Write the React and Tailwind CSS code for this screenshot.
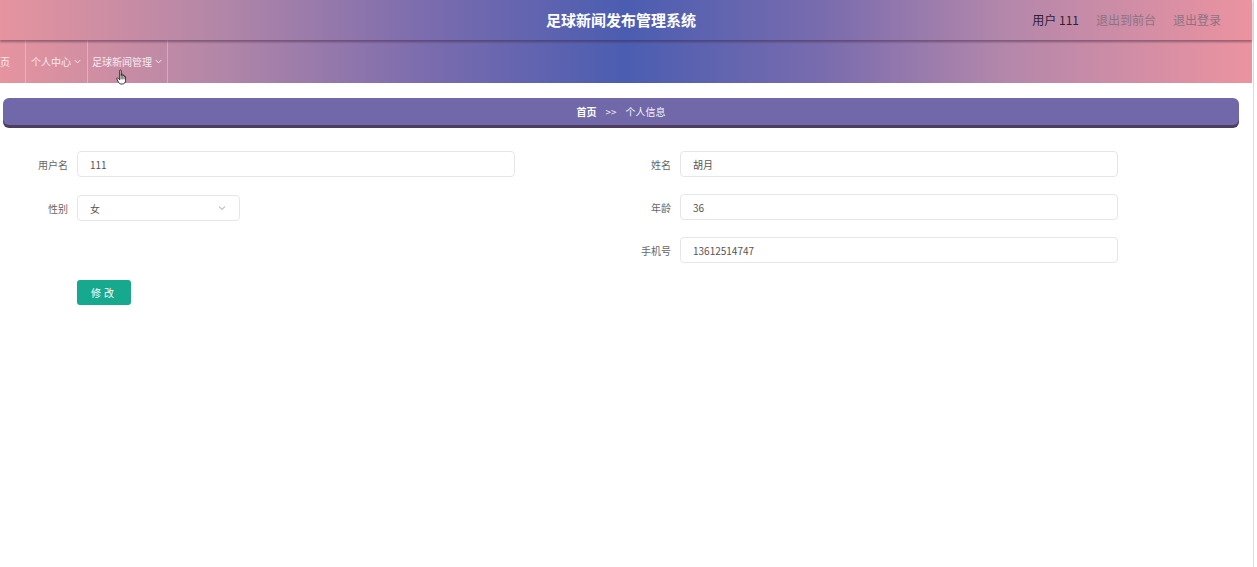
import React from "react";

const Chevron = ({ className = "" }) => (
  <svg viewBox="0 0 10 10" className={className} fill="none" stroke="currentColor" strokeWidth="1.1">
    <path d="M2 3.5 L5 6.5 L8 3.5" />
  </svg>
);

const HandCursor = () => (
  <svg viewBox="0 0 14 18" width="13" height="17" className="absolute left-[116px] top-[69px]">
    <path
      d="M4 1.5 C4 0.7 5.6 0.7 5.6 1.5 L5.6 7 L5.8 5.8 C5.8 5 7.3 5 7.3 5.8 L7.3 7.2 C7.3 6.4 8.8 6.4 8.8 7.2 L8.8 8 C8.8 7.3 10.3 7.3 10.3 8.1 L10.3 12 C10.3 14.5 9 16 7 16 L5.5 16 C4 16 3.2 15 2.5 13.8 L0.9 10.5 C0.5 9.7 1.6 9 2.3 9.8 L4 11.5 Z"
      fill="#ffffff"
      stroke="#111"
      strokeWidth="0.9"
      strokeLinejoin="round"
    />
    <path d="M5.6 7 L5.6 11 M7.3 7.2 L7.3 11 M8.8 8 L8.8 11" stroke="#111" strokeWidth="0.7" />
  </svg>
);

const Field = ({ label, value, width = "w-[438px]", select = false }) => (
  <div className="flex items-center h-[26px]">
    <div className="w-[77px] pr-[9px] text-right text-[10px] text-[#666]">{label}</div>
    <div
      className={`${width} h-[26px] border border-[#e4e6eb] rounded-[4px] bg-white flex items-center px-[12px] text-[10px] text-[#555] justify-between`}
    >
      <span>{value}</span>
      {select && <Chevron className="w-[10px] h-[10px] text-[#c0c4cc]" />}
    </div>
  </div>
);

export default function App() {
  return (
    <div
      className="relative w-[1257px] h-[567px] bg-white overflow-hidden flex"
      style={{ fontFamily: '"Noto Sans CJK SC", "Noto Sans", sans-serif' }}
    >
      <div className="w-[1252px] flex flex-col">
        {/* Header */}
        <div className="bg-[linear-gradient(to_right,#e6949f_0%,#b186a8_18%,#7b6cae_34%,#4b5db1_50%,#7a6cae_66%,#b387ab_80%,#ec93a0_100%)]">
          <div className="h-[40px] grid grid-cols-[1fr_auto_1fr] items-center pr-[10px] shadow-[0_2px_2px_rgba(60,30,60,0.45)] relative">
            <div />
            <div className="text-white font-bold text-[15px] tracking-[0px]">足球新闻发布管理系统</div>
            <div className="flex justify-end items-center gap-[17px] pr-[21px] text-[12px]">
              <span className="text-[#2c2233]">用户 111</span>
              <span className="text-[#8c7384]">退出到前台</span>
              <span className="text-[#8c7384]">退出登录</span>
            </div>
          </div>
          <div className="h-[43px] flex items-center text-[10px] text-[#f7eaf0] -ml-[12px]">
            <div className="h-full flex items-center pl-[2px] pr-[15px] border-r border-white/30">首页</div>
            <div className="h-full flex items-center gap-[2px] px-[5px] border-r border-white/30">
              个人中心
              <Chevron className="w-[9px] h-[9px]" />
            </div>
            <div className="h-full flex items-center gap-[2px] px-[4px] border-r border-white/30">
              足球新闻管理
              <Chevron className="w-[9px] h-[9px]" />
            </div>
          </div>
        </div>

        {/* Breadcrumb */}
        <div className="mt-[15px] ml-[3px] w-[1236px] h-[27px] rounded-[6px] bg-[#7068a8] shadow-[0_3px_0_#4d3d5e] flex items-center justify-center text-[10px] text-white">
          <span className="font-bold">首页</span>
          <span className="mx-[9px] opacity-90">&gt;&gt;</span>
          <span className="opacity-95">个人信息</span>
        </div>

        {/* Form */}
        <div className="mt-[26px] flex">
          <div className="w-[603px] flex flex-col gap-[18px]">
            <Field label="用户名" value="111" />
            <Field label="性别" value="女" width="w-[163px]" select />
          </div>
          <div className="w-[603px] flex flex-col gap-[17px]">
            <Field label="姓名" value="胡月" />
            <Field label="年龄" value="36" />
            <Field label="手机号" value="13612514747" />
          </div>
        </div>
        <div className="mt-[15px] ml-[77px]">
          <button className="w-[54px] h-[25px] rounded-[3px] bg-[#16a98d] text-white text-[10px] tracking-[3px]">
            修改
          </button>
        </div>
      </div>
      <div className="flex-1 border-l border-[#dcdcdc] ml-[1px]" />
      <HandCursor />
    </div>
  );
}
